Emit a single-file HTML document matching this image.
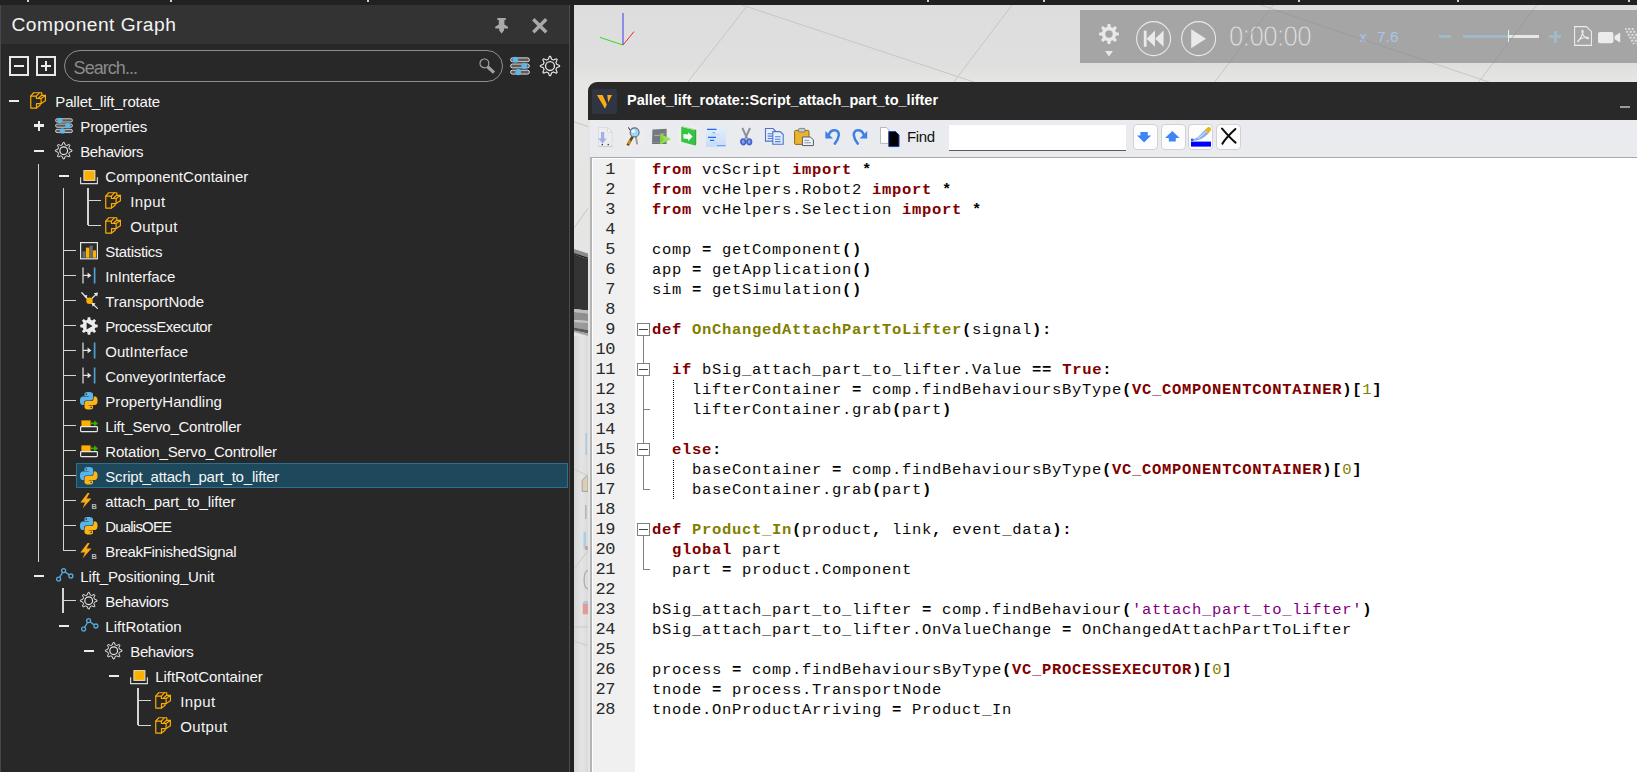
<!DOCTYPE html>
<html>
<head>
<meta charset="utf-8">
<title>Component Graph</title>
<style>
*{box-sizing:border-box;margin:0;padding:0}
html,body{width:1637px;height:772px;overflow:hidden;background:#dedede}
body{position:relative;font-family:"Liberation Sans",sans-serif;color:#f2f2f2}
.abs{position:absolute}
svg.ic{display:block;overflow:visible}
#topbar{left:0;top:0;width:1637px;height:5px;background:#212121}
#topbar i{position:absolute;top:0;width:2px;height:2px;background:#cfcfcf}
/* left panel */
#panel{left:0;top:5px;width:570px;height:767px;background:#282828;border-left:1px solid #474747;border-right:1px solid #4c4c4c}
#phead{left:1px;top:5px;width:568px;height:39px;background:#333}
#ptitle{left:11.5px;top:12.5px;font-size:19.2px;letter-spacing:0.46px;line-height:24px;color:#f4f4f4;white-space:nowrap}
#gutter{left:570px;top:5px;width:4px;height:767px;background:#222}
.tbox{position:absolute;top:56px;width:20px;height:20px;border:2px solid #e8e8e8}
#search{left:63.6px;top:50.2px;width:439.6px;height:31.8px;border:1.3px solid #8e8e8e;border-radius:16px}
#stext{left:73.6px;top:56.3px;font-size:18px;letter-spacing:-0.95px;line-height:24px;color:#8b8b8b;white-space:nowrap}
/* tree */
.lbl{position:absolute;line-height:25px;height:25px;font-size:15px;color:#f6f6f6;white-space:nowrap;padding-top:1px}
.ln{position:absolute;background:#d4d4d4}
.tg{position:absolute;background:#ececec}
#sel{left:76px;top:463px;width:492px;height:25px;background:#1e495d;border:1px solid #2b7091}
/* viewport */
#view{left:574px;top:5px;width:1063px;height:767px;background:linear-gradient(180deg,#dddddd 0,#dfdfdf 60px,#e6e6e4 78px,#e2e2e2 100%)}
#sim{left:1080px;top:10px;width:557px;height:53px;background:#a5a5a5}
/* editor window */
#win{left:588px;top:82px;width:1049px;height:690px;background:#e9ebee;border-top-left-radius:9px;overflow:hidden;border-left:2px solid #e4e4e4}
#wtitle{left:588px;top:82px;width:1049px;height:37.5px;background:#292929;border-top-left-radius:9px}
#wtext{left:627px;top:90px;font-size:14.5px;font-weight:bold;line-height:20px;color:#fff;white-space:nowrap}
#logo{left:592px;top:88.5px;width:25px;height:25px;background:#2f3541;border-radius:2px}
#find{left:907px;top:126.7px;font-size:15px;letter-spacing:-0.4px;line-height:20px;color:#101010}
#finput{left:949px;top:125px;width:177px;height:26px;background:#fff;border-bottom:1.2px solid #5a5a5a}
.fbtn{position:absolute;top:124.3px;width:25px;height:25.4px;background:#fdfdfd;border:1px solid #d2d2d2;border-radius:4px}
#edline{left:591px;top:157px;width:1046px;height:1px;background:#a9a9a9}
#edleft{left:590px;top:157px;width:1.6px;height:615px;background:#b4b4b4}
#ed{left:592px;top:158px;width:1045px;height:614px;background:#fff}
#lnm{left:593px;top:159px;width:42px;height:613px;background:#f0f0f0}
.num{position:absolute;left:585px;width:30px;height:20px;text-align:right;font-family:"Liberation Mono",monospace;font-size:17px;line-height:20px;color:#2a2a2a;letter-spacing:-0.4px;padding-top:1px}
.cl{position:absolute;left:652px;height:20px;line-height:20px;font-family:"Liberation Mono",monospace;font-size:15.5px;letter-spacing:0.7px;color:#0a0a0a;white-space:pre;padding-top:1px}
.cl b{font-weight:bold}
.k{color:#7f0000}
.f{color:#7f7f00}
.o{color:#000}
.s{color:#7f007f;font-weight:normal!important}
.n{color:#7f7f00;font-weight:normal!important}
.fb{position:absolute;left:637px;width:13px;height:13px;border:1px solid #808080;background:#fff}
.fb:after{content:"";position:absolute;left:1px;top:5px;width:9px;height:1px;background:#444}
.fl{position:absolute;background:#808080}
.ig{position:absolute;left:672.5px;width:1px;background:repeating-linear-gradient(180deg,#000 0,#000 1px,transparent 1px,transparent 2px)}
#simtime{left:1229px;top:18.6px;font-size:26.5px;line-height:36px;color:#e6e6e6;letter-spacing:-0.6px;-webkit-text-stroke:0.9px #a5a5a5;transform:scale(0.975,1.13);transform-origin:0 27px}
#simx{left:1359.6px;top:27.4px;font-size:14px;line-height:20px;color:#a9c6ea}
#simv{left:1377px;top:27px;font-size:15.5px;line-height:20px;color:#a9c6ea}
</style>
</head>
<body>
<div id="view" class="abs"></div>
<div class="abs" style="left:599.0px;top:12.0px;width:36px;height:36px;"><svg class="ic" width="36" height="36" viewBox="0 0 36 36" ><path d="M24 1 V33" stroke="#3c3cf0" stroke-width="1"/><path d="M24 33 L1 25.4" stroke="#28e028" stroke-width="1"/><path d="M24 33 L35 19.6" stroke="#f02828" stroke-width="1"/></svg></div>
<svg class="abs" style="left:0;top:0" width="1637" height="772" viewBox="0 0 1637 772"><g stroke="#c6c6c4" stroke-width="1" fill="none"><path d="M747.7 5 L687 83"/><path d="M742 5 L971 81 L1000 91"/><path d="M1012 5 L953 83"/><path d="M1273 5 L1214 83"/><path d="M1260.6 5 L1483 80 L1500 86"/><path d="M1536.8 5 L1478 83"/><path d="M574 121.8 L589 127"/><path d="M574 228 L589 207"/><path d="M574 455 L589 462"/><path d="M574 600 L589 585"/></g></svg><svg class="abs" style="left:574px;top:82px" width="14" height="690" viewBox="574 82 14 690"><defs><linearGradient id="sg" x1="0" x2="1" y1="0" y2="0"><stop offset="0" stop-color="#d6d6d6"/><stop offset="0.55" stop-color="#e4e4e4"/><stop offset="1" stop-color="#dadada"/></linearGradient></defs><rect x="574" y="336" width="14" height="436" fill="url(#sg)"/><path d="M574 249 L588 253.6 V257.4 L574 253Z" fill="#8c8c8c"/><path d="M574 253 L588 257.4 V259 L574 254.6Z" fill="#1c1c1c"/><path d="M574 254.6 L588 259 V310.6 L574 309Z" fill="#343434"/><path d="M574 309 L588 310.6 V313.4 L574 312Z" fill="#bdbdbd"/><path d="M574 312 L588 313.4 V321 L574 320Z" fill="#8e8e8e"/><path d="M574 320 L588 321 V323 L574 322Z" fill="#c2c2c2"/><path d="M574 322 L588 323 V330 L574 327.6Z" fill="#9a9a9a"/><path d="M574 327.6 L588 330 V333.4 L574 330.6Z" fill="#5a5a5a"/><path d="M574 330.6 L588 333.4 V336 L574 332Z" fill="#a4a4a4"/><path d="M586.3 433 V455" stroke="#a9c9e2" stroke-width="1.5"/><path d="M582.2 480.2 L588 474.8 V491.4 H582.2Z" fill="#dccfb2" stroke="#a2a2a2" stroke-width="1"/><path d="M585.8 505 V519" stroke="#b6b6b6" stroke-width="1.6"/><path d="M584.8 532 V549.4" stroke="#a6d0ea" stroke-width="2.6"/><rect x="585.6" y="546" width="2" height="4" fill="#e08a7a"/><path d="M588 570.4 Q583.8 572 584.2 580 Q584 588 588 589" fill="none" stroke="#aaa" stroke-width="1.2"/><path d="M582.8 603 L585 601.2 H588 V614.2 H582.8Z" fill="#e29a96"/><path d="M582.8 603 L585 601.2 H588 V604 H582.8Z" fill="#a9c9e2"/><g stroke="#c9c9c7" stroke-width="1" fill="none"><path d="M574 469 L588 476"/><path d="M574 569 L588 550.6"/><path d="M574 627 H588"/><path d="M574 641 L588 645.6"/></g></svg>
<div id="topbar" class="abs"><i style="left:27px"></i><i style="left:170px"></i><i style="left:367px"></i><i style="left:927px"></i><i style="left:1043px"></i><i style="left:1298px"></i><i style="left:1457px"></i><i style="left:1628px"></i></div>
<div id="sim" class="abs"></div>
<div class="abs" style="left:1099.0px;top:24.4px;width:20px;height:20px;"><svg class="ic" width="20" height="20" viewBox="0 0 20 20" ><path fill="#e9e9e9" fill-rule="evenodd" d="M8.26 3.01 L8.67 0.09 L11.33 0.09 L11.74 3.01 L13.71 3.83 L16.07 2.05 L17.95 3.93 L16.17 6.29 L16.99 8.26 L19.91 8.67 L19.91 11.33 L16.99 11.74 L16.17 13.71 L17.95 16.07 L16.07 17.95 L13.71 16.17 L11.74 16.99 L11.33 19.91 L8.67 19.91 L8.26 16.99 L6.29 16.17 L3.93 17.95 L2.05 16.07 L3.83 13.71 L3.01 11.74 L0.09 11.33 L0.09 8.67 L3.01 8.26 L3.83 6.29 L2.05 3.93 L3.93 2.05 L6.29 3.83Z M10 6.2 A3.8 3.8 0 1 0 10.01 6.2Z"/></svg></div>
<div class="abs" style="left:1105.2px;top:51.0px;width:8px;height:5.6px;"><svg class="ic" width="8" height="5.6" viewBox="0 0 8 5.6" ><path d="M0 0 H8 L4 5.6Z" fill="#e9e9e9"/></svg></div>
<div class="abs" style="left:1136.4px;top:21.1px;width:35.2px;height:35.2px;"><svg class="ic" width="35.2" height="35.2" viewBox="0 0 35.2 35.2" ><circle cx="17.6" cy="17.6" r="17" fill="none" stroke="#e9e9e9" stroke-width="1.1"/><rect x="7.8" y="9.6" width="2.8" height="16.2" fill="#e9e9e9"/><path d="M19 9.6 V25.8 L10.6 17.7Z M27.6 9.6 V25.8 L19.2 17.7Z" fill="#e9e9e9"/></svg></div>
<div class="abs" style="left:1181.4px;top:21.1px;width:35.2px;height:35.2px;"><svg class="ic" width="35.2" height="35.2" viewBox="0 0 35.2 35.2" ><circle cx="17.6" cy="17.6" r="17" fill="none" stroke="#e9e9e9" stroke-width="1.1"/><path d="M10.2 8.2 L25 17.7 L10.2 27.2Z" fill="#e9e9e9"/></svg></div>
<div id="simtime" class="abs">0:00:00</div>
<div id="simx" class="abs">x</div><div id="simv" class="abs">7.6</div>
<div class="abs" style="left:1439px;top:35.2px;width:12px;height:3px;background:#9fb9c6"></div>
<div class="abs" style="left:1462.5px;top:35.2px;width:46px;height:3px;background:#9fb9c6"></div>
<div class="abs" style="left:1508.5px;top:35.2px;width:30.5px;height:3px;background:#e8e8e8"></div>
<div class="abs" style="left:1508px;top:30px;width:1.4px;height:13px;background:#ececec"></div>
<div class="abs" style="left:1549px;top:35.2px;width:12px;height:3px;background:#9fb9c6"></div>
<div class="abs" style="left:1553.6px;top:30.6px;width:3px;height:12px;background:#9fb9c6"></div>
<div class="abs" style="left:1574.0px;top:26.0px;width:18px;height:20px;"><svg class="ic" width="18" height="20" viewBox="0 0 18 20" ><path d="M0.6 0.6 H12.4 L17.4 5.4 V19.4 H0.6Z" fill="none" stroke="#ececec" stroke-width="1.1"/><path d="M8.6 4.2 C10.2 4.6 8 10 4.2 15.4 C3 16.6 3.4 13.8 8.4 12 C12.6 10.6 15.6 11.6 14.4 12.6 C13 13.4 9.4 10.6 8.2 6.6 C7.8 5 8 4.2 8.6 4.2Z" fill="none" stroke="#ececec" stroke-width="1.1"/></svg></div>
<div class="abs" style="left:1598.0px;top:31.8px;width:22.4px;height:11.2px;"><svg class="ic" width="22.4" height="11.2" viewBox="0 0 22.4 11.2" ><rect x="0" y="0" width="15.4" height="11.2" rx="2" fill="#ececec"/><path d="M16.6 4 L22.2 0.6 V10.6 L16.6 7.2Z" fill="#ececec"/></svg></div>
<div class="abs" style="left:1625.0px;top:28.0px;width:12px;height:17px;overflow:hidden"><svg class="ic" width="12" height="17" viewBox="0 0 12 17" ><g stroke="#dcdcdc" stroke-width="2.2" stroke-dasharray="2 1.4"><path d="M0 0 L9 16 M3.6 0 L12.6 16 M7.2 0 L16.2 16"/></g></svg></div>
<svg class="abs" style="left:1080px;top:10px" width="557" height="53" viewBox="1080 10 557 53"><g stroke="#999" stroke-width="1" fill="none" opacity="0.75"><path d="M1273 5 L1214 83"/><path d="M1260.6 5 L1483 80"/><path d="M1536.8 5 L1478 83"/></g></svg>
<div id="panel" class="abs"></div>
<div id="phead" class="abs"></div>
<div id="ptitle" class="abs">Component Graph</div>
<div class="abs" style="left:495.0px;top:17.8px;width:13.2px;height:15.4px;"><svg class="ic" width="13.2" height="15.4" viewBox="0 0 13.2 15.4" ><path fill="#a9a9a9" d="M2.4 0 H10.8 V2 H9.4 V6.4 L13 8.8 V10.4 H9 V12.4 L6.6 15.4 L4.2 12.4 V10.4 H0.2 V8.8 L3.8 6.4 V2 H2.4Z"/></svg></div>
<div class="abs" style="left:531.7px;top:17.6px;width:15.6px;height:15.6px;"><svg class="ic" width="15.6" height="15.6" viewBox="0 0 15.6 15.6" ><path d="M1.3 1.3 L14.3 14.3 M14.3 1.3 L1.3 14.3" stroke="#a9a9a9" stroke-width="3.4" fill="none"/></svg></div>
<div class="abs" style="left:478.6px;top:57.8px;width:16px;height:16px;"><svg class="ic" width="16" height="16" viewBox="0 0 16 16" ><circle cx="5.4" cy="5.4" r="4.4" fill="none" stroke="#a2a2a2" stroke-width="1.2"/><path d="M8.6 8.8 L15 14.6" stroke="#a2a2a2" stroke-width="3.2"/></svg></div>
<div class="abs" style="left:510.0px;top:57.0px;width:20px;height:18px;"><svg class="ic" width="20" height="18" viewBox="0 0 20 18" ><g transform="scale(1.1111 1.1688)"><rect x="0.55" y="0.75" width="16.9" height="3.3" rx="1.65" fill="#5a5a5a" stroke="#e4e4e4" stroke-width="0.85"/><rect x="0.55" y="6.00" width="16.9" height="3.3" rx="1.65" fill="#5a5a5a" stroke="#e4e4e4" stroke-width="0.85"/><rect x="0.55" y="11.30" width="16.9" height="3.3" rx="1.65" fill="#5a5a5a" stroke="#e4e4e4" stroke-width="0.85"/><circle cx="4.9" cy="2.4" r="2.6" fill="#5bb7ea"/><circle cx="12.8" cy="7.65" r="2.6" fill="#5bb7ea"/><circle cx="7.4" cy="12.95" r="2.6" fill="#5bb7ea"/></g></svg></div>
<div class="abs" style="left:540.0px;top:56.0px;width:20px;height:20px;"><svg class="ic" width="20" height="20" viewBox="0 0 20 20" ><g transform="scale(1.0000)" fill="none" stroke="#e8e8e8" stroke-linejoin="round"><path stroke-width="1.15" d="M8.28 3.32 L9.43 0.42 L10.57 0.42 L11.72 3.32 L13.51 4.06 L16.38 2.82 L17.18 3.62 L15.94 6.49 L16.68 8.28 L19.58 9.43 L19.58 10.57 L16.68 11.72 L15.94 13.51 L17.18 16.38 L16.38 17.18 L13.51 15.94 L11.72 16.68 L10.57 19.58 L9.43 19.58 L8.28 16.68 L6.49 15.94 L3.62 17.18 L2.82 16.38 L4.06 13.51 L3.32 11.72 L0.42 10.57 L0.42 9.43 L3.32 8.28 L4.06 6.49 L2.82 3.62 L3.62 2.82 L6.49 4.06Z"/><circle cx="10" cy="10" r="4.45" stroke-width="1.35"/></g></svg></div>
<div class="tbox" style="left:9px"></div><div class="tbox" style="left:36px"></div>
<div class="tg" style="left:14px;top:65px;width:10px;height:2px"></div>
<div class="tg" style="left:41px;top:65px;width:10px;height:2px"></div><div class="tg" style="left:45px;top:61px;width:2px;height:10px"></div>
<div id="search" class="abs"></div>
<div id="stext" class="abs">Search...</div>
<div id="sel" class="abs"></div>
<div class="tg" style="left:9.4px;top:99.5px;width:9.8px;height:2px"></div>
<div class="abs" style="left:30.0px;top:91.9px;width:16px;height:17.2px"><svg class="ic" width="16" height="17.2" viewBox="0 0 16 17.2" ><g fill="none" stroke="#fbab00" stroke-width="1.2" stroke-linejoin="round" stroke-linecap="round"><path d="M0.75 4.1 L3.7 0.75 H11.8 V2.9"/><path d="M6.4 4.1 L9.2 0.9"/><path d="M0.75 4.1 V16.1 H6.5 V11.6 H11.1 V6.5 H6.4 V4.1 Z"/><path d="M11.1 6.5 L15.4 3.3 V8.8 L11.1 11.6"/><path d="M15.4 3.3 H11.6 L8.4 6.2"/><path d="M6.5 16.1 L10.1 13.3 V11.8"/></g></svg></div>
<div class="lbl" id="l0" style="left:55.3px;top:88px;letter-spacing:-0.163px">Pallet_lift_rotate</div>
<div class="tg" style="left:34.3px;top:124.4px;width:10px;height:2.2px"></div>
<div class="tg" style="left:38.2px;top:120.5px;width:2.2px;height:10px"></div>
<div class="abs" style="left:55.0px;top:117.8px;width:18px;height:15.4px"><svg class="ic" width="18" height="15.4" viewBox="0 0 18 15.4" ><g transform="scale(1.0000 1.0000)"><rect x="0.55" y="0.75" width="16.9" height="3.3" rx="1.65" fill="#5a5a5a" stroke="#e4e4e4" stroke-width="0.85"/><rect x="0.55" y="6.00" width="16.9" height="3.3" rx="1.65" fill="#5a5a5a" stroke="#e4e4e4" stroke-width="0.85"/><rect x="0.55" y="11.30" width="16.9" height="3.3" rx="1.65" fill="#5a5a5a" stroke="#e4e4e4" stroke-width="0.85"/><circle cx="4.9" cy="2.4" r="2.6" fill="#5bb7ea"/><circle cx="12.8" cy="7.65" r="2.6" fill="#5bb7ea"/><circle cx="7.4" cy="12.95" r="2.6" fill="#5bb7ea"/></g></svg></div>
<div class="lbl" id="l1" style="left:80.3px;top:113px;letter-spacing:-0.164px">Properties</div>
<div class="tg" style="left:34.4px;top:149.5px;width:9.8px;height:2px"></div>
<div class="abs" style="left:55.3px;top:141.8px;width:17.4px;height:17.4px"><svg class="ic" width="17.4" height="17.4" viewBox="0 0 17.4 17.4" ><g transform="scale(0.8700)" fill="none" stroke="#e8e8e8" stroke-linejoin="round"><path stroke-width="1.15" d="M8.28 3.32 L9.43 0.42 L10.57 0.42 L11.72 3.32 L13.51 4.06 L16.38 2.82 L17.18 3.62 L15.94 6.49 L16.68 8.28 L19.58 9.43 L19.58 10.57 L16.68 11.72 L15.94 13.51 L17.18 16.38 L16.38 17.18 L13.51 15.94 L11.72 16.68 L10.57 19.58 L9.43 19.58 L8.28 16.68 L6.49 15.94 L3.62 17.18 L2.82 16.38 L4.06 13.51 L3.32 11.72 L0.42 10.57 L0.42 9.43 L3.32 8.28 L4.06 6.49 L2.82 3.62 L3.62 2.82 L6.49 4.06Z"/><circle cx="10" cy="10" r="4.45" stroke-width="1.35"/></g></svg></div>
<div class="lbl" id="l2" style="left:80.3px;top:138px;letter-spacing:-0.438px">Behaviors</div>
<div class="tg" style="left:59.4px;top:174.5px;width:9.8px;height:2px"></div>
<div class="abs" style="left:80.0px;top:170.1px;width:18px;height:14.4px"><svg class="ic" width="18" height="14.4" viewBox="0 0 18 14.4" ><path d="M0.6 7.2 V13.6 H17.4 V7.2" fill="none" stroke="#d8d8d8" stroke-width="1.2"/><rect x="3.9" y="0.6" width="11" height="9.8" fill="#fdb000" stroke="#e8e0c8" stroke-width="1"/></svg></div>
<div class="lbl" id="l3" style="left:105.3px;top:163px;letter-spacing:0.024px">ComponentContainer</div>
<div class="abs" style="left:105.0px;top:191.9px;width:16px;height:17.2px"><svg class="ic" width="16" height="17.2" viewBox="0 0 16 17.2" ><g fill="none" stroke="#fbab00" stroke-width="1.2" stroke-linejoin="round" stroke-linecap="round"><path d="M0.75 4.1 L3.7 0.75 H11.8 V2.9"/><path d="M6.4 4.1 L9.2 0.9"/><path d="M0.75 4.1 V16.1 H6.5 V11.6 H11.1 V6.5 H6.4 V4.1 Z"/><path d="M11.1 6.5 L15.4 3.3 V8.8 L11.1 11.6"/><path d="M15.4 3.3 H11.6 L8.4 6.2"/><path d="M6.5 16.1 L10.1 13.3 V11.8"/></g></svg></div>
<div class="lbl" id="l4" style="left:130.3px;top:188px;letter-spacing:0.406px">Input</div>
<div class="abs" style="left:105.0px;top:216.9px;width:16px;height:17.2px"><svg class="ic" width="16" height="17.2" viewBox="0 0 16 17.2" ><g fill="none" stroke="#fbab00" stroke-width="1.2" stroke-linejoin="round" stroke-linecap="round"><path d="M0.75 4.1 L3.7 0.75 H11.8 V2.9"/><path d="M6.4 4.1 L9.2 0.9"/><path d="M0.75 4.1 V16.1 H6.5 V11.6 H11.1 V6.5 H6.4 V4.1 Z"/><path d="M11.1 6.5 L15.4 3.3 V8.8 L11.1 11.6"/><path d="M15.4 3.3 H11.6 L8.4 6.2"/><path d="M6.5 16.1 L10.1 13.3 V11.8"/></g></svg></div>
<div class="lbl" id="l5" style="left:130.3px;top:213px;letter-spacing:0.394px">Output</div>
<div class="abs" style="left:80.0px;top:241.8px;width:18px;height:17.4px"><svg class="ic" width="18" height="17.4" viewBox="0 0 18 17.4" ><rect x="0.6" y="0.6" width="16.8" height="16.2" fill="#2a2a2a" stroke="#e6e6e6" stroke-width="1.2"/><rect x="2.4" y="9.4" width="3.2" height="6.4" fill="#6c6c6c"/><rect x="5.9" y="5.6" width="3.6" height="10.2" fill="#fdb000"/><rect x="9.6" y="3.6" width="3.2" height="12.2" fill="#6c6c6c"/><rect x="12.9" y="8.4" width="3.2" height="7.4" fill="#fdb000"/></svg></div>
<div class="lbl" id="l6" style="left:105.3px;top:238px;letter-spacing:-0.313px">Statistics</div>
<div class="abs" style="left:82.0px;top:267.0px;width:14px;height:17px"><svg class="ic" width="14" height="17" viewBox="0 0 14 17" ><path d="M1 0.5 V16.5" stroke="#dcdcdc" stroke-width="1.25"/><path d="M1 8.4 H7" stroke="#dcdcdc" stroke-width="1.25"/><path d="M5.6 5.6 L9.4 8.4 L5.6 11.2Z" fill="#e6e6e6"/><path d="M12.6 0.5 V16.5" stroke="#4f9fd0" stroke-width="1.7"/></svg></div>
<div class="lbl" id="l7" style="left:105.3px;top:263px;letter-spacing:-0.089px">InInterface</div>
<div class="abs" style="left:80.5px;top:291.8px;width:17.5px;height:17.5px"><svg class="ic" width="17.5" height="17.5" viewBox="0 0 17.5 17.5" ><g stroke="#e6e6e6" stroke-width="1.3" stroke-linecap="round"><path d="M0.8 0.8 L8.5 8.7"/><path d="M8.5 8.7 L16 1.4"/><path d="M8.5 8.7 L16.4 16.4"/></g><path d="M16.8 0.4 L16.2 4.6 L12.8 1.2Z" fill="#ececec"/><path d="M10.6 10.8 L14.6 11.6 L11.6 14.8Z" fill="#ececec"/><path d="M3.2 5.8 L6.6 5.0 L4.6 2.6Z" fill="#ececec" transform="rotate(180 4.8 4.4)"/><circle cx="8.5" cy="8.7" r="3.2" fill="#fdb000"/></svg></div>
<div class="lbl" id="l8" style="left:105.3px;top:288px;letter-spacing:-0.058px">TransportNode</div>
<div class="abs" style="left:80.0px;top:316.5px;width:18px;height:18px"><svg class="ic" width="18" height="18" viewBox="0 0 18 18" ><path fill="#ececec" d="M7.36 2.81 L7.76 0.29 L10.24 0.29 L10.64 2.81 L12.21 3.47 L14.28 1.96 L16.04 3.72 L14.53 5.79 L15.19 7.36 L17.71 7.76 L17.71 10.24 L15.19 10.64 L14.53 12.21 L16.04 14.28 L14.28 16.04 L12.21 14.53 L10.64 15.19 L10.24 17.71 L7.76 17.71 L7.36 15.19 L5.79 14.53 L3.72 16.04 L1.96 14.28 L3.47 12.21 L2.81 10.64 L0.29 10.24 L0.29 7.76 L2.81 7.36 L3.47 5.79 L1.96 3.72 L3.72 1.96 L5.79 3.47Z"/><path fill="#282828" d="M6.6 5.4 L12.6 9 L6.6 12.6Z"/></svg></div>
<div class="lbl" id="l9" style="left:105.3px;top:313px;letter-spacing:-0.464px">ProcessExecutor</div>
<div class="abs" style="left:82.0px;top:342.0px;width:14px;height:17px"><svg class="ic" width="14" height="17" viewBox="0 0 14 17" ><path d="M1 0.5 V16.5" stroke="#dcdcdc" stroke-width="1.25"/><path d="M1 8.4 H7" stroke="#dcdcdc" stroke-width="1.25"/><path d="M5.6 5.6 L9.4 8.4 L5.6 11.2Z" fill="#e6e6e6"/><path d="M12.6 0.5 V16.5" stroke="#4f9fd0" stroke-width="1.7"/></svg></div>
<div class="lbl" id="l10" style="left:105.3px;top:338px;letter-spacing:0.023px">OutInterface</div>
<div class="abs" style="left:82.0px;top:367.0px;width:14px;height:17px"><svg class="ic" width="14" height="17" viewBox="0 0 14 17" ><path d="M1 0.5 V16.5" stroke="#dcdcdc" stroke-width="1.25"/><path d="M1 8.4 H7" stroke="#dcdcdc" stroke-width="1.25"/><path d="M5.6 5.6 L9.4 8.4 L5.6 11.2Z" fill="#e6e6e6"/><path d="M12.6 0.5 V16.5" stroke="#4f9fd0" stroke-width="1.7"/></svg></div>
<div class="lbl" id="l11" style="left:105.3px;top:363px;letter-spacing:-0.130px">ConveyorInterface</div>
<div class="abs" style="left:80.2px;top:391.8px;width:17.5px;height:17.5px"><svg class="ic" width="17.5" height="17.5" viewBox="0 0 17.5 17.5" ><g transform="scale(0.73)"><path fill-rule="evenodd" fill="#5bb4e8" d="M14.25.18l.9.2.73.26.59.3.45.32.34.34.25.34.16.33.1.3.04.26.02.2-.01.13V8.5l-.05.63-.13.55-.21.46-.26.38-.3.31-.33.25-.35.19-.35.14-.33.1-.3.07-.26.04-.21.02H8.77l-.69.05-.59.14-.5.22-.41.27-.33.32-.27.35-.2.36-.15.37-.1.35-.07.32-.04.27-.02.21v3.06H3.17l-.21-.03-.28-.07-.32-.12-.35-.18-.36-.26-.36-.36-.35-.46-.32-.59-.28-.73-.21-.88-.14-1.05-.05-1.23.06-1.22.16-1.04.24-.87.32-.71.36-.57.4-.44.42-.33.42-.24.4-.16.36-.1.32-.05.24-.01h.16l.06.01h8.16v-.83H6.18l-.01-2.75-.02-.37.05-.34.11-.31.17-.28.25-.26.31-.23.38-.2.44-.18.51-.15.58-.12.64-.1.71-.06.77-.04.84-.02 1.27.05zM7.95 2.16l-.23.33-.08.41.08.41.23.34.33.22.41.09.41-.09.33-.22.23-.34.08-.41-.08-.41-.23-.33-.33-.22-.41-.09-.41.09z"/><path fill-rule="evenodd" fill="#fdb515" d="M21.04 6.11l.28.06.32.12.35.18.36.27.36.35.35.47.32.59.28.73.21.88.14 1.04.05 1.23-.06 1.23-.16 1.04-.24.86-.32.71-.36.57-.4.45-.42.33-.42.24-.4.16-.36.09-.32.05-.24.02-.16-.01h-8.22v.82h5.84l.01 2.76.02.36-.05.34-.11.31-.17.29-.25.25-.31.24-.38.2-.44.17-.51.15-.58.13-.64.09-.71.07-.77.04-.84.01-1.27-.04-1.07-.14-.9-.2-.73-.25-.59-.3-.45-.33-.34-.34-.25-.34-.16-.33-.1-.3-.04-.25-.02-.2.01-.13v-5.34l.05-.64.13-.54.21-.46.26-.38.3-.32.33-.24.35-.2.35-.14.33-.1.3-.06.26-.04.21-.02.13-.01h5.84l.69-.05.59-.14.5-.21.41-.28.33-.32.27-.35.2-.36.15-.36.1-.35.07-.32.04-.28.02-.21V6.07h2.09l.14.01zM14.57 20.36l-.23.33-.08.41.08.41.23.33.33.23.41.08.41-.08.33-.23.23-.33.08-.41-.08-.41-.23-.33-.33-.23-.41-.08-.41.08z"/></g></svg></div>
<div class="lbl" id="l12" style="left:105.3px;top:388px;letter-spacing:0.046px">PropertyHandling</div>
<div class="abs" style="left:80.0px;top:420.3px;width:18px;height:12.4px"><svg class="ic" width="18" height="12.4" viewBox="0 0 18 12.4" ><rect x="1.4" y="0.4" width="9.2" height="5.6" fill="#fdb000"/><path d="M11 2.6 H14.2 V0.2 L18 3.4 L14.2 6.6 V4.3 H11Z" fill="#35b000"/><rect x="0.6" y="6.6" width="16.8" height="5" rx="0.8" fill="#2a2a2a" stroke="#e8e8e8" stroke-width="1.2"/></svg></div>
<div class="lbl" id="l13" style="left:105.3px;top:413px;letter-spacing:-0.245px">Lift_Servo_Controller</div>
<div class="abs" style="left:80.0px;top:445.3px;width:18px;height:12.4px"><svg class="ic" width="18" height="12.4" viewBox="0 0 18 12.4" ><rect x="1.4" y="0.4" width="9.2" height="5.6" fill="#fdb000"/><path d="M11 2.6 H14.2 V0.2 L18 3.4 L14.2 6.6 V4.3 H11Z" fill="#35b000"/><rect x="0.6" y="6.6" width="16.8" height="5" rx="0.8" fill="#2a2a2a" stroke="#e8e8e8" stroke-width="1.2"/></svg></div>
<div class="lbl" id="l14" style="left:105.3px;top:438px;letter-spacing:-0.207px">Rotation_Servo_Controller</div>
<div class="abs" style="left:80.2px;top:466.8px;width:17.5px;height:17.5px"><svg class="ic" width="17.5" height="17.5" viewBox="0 0 17.5 17.5" ><g transform="scale(0.73)"><path fill-rule="evenodd" fill="#5bb4e8" d="M14.25.18l.9.2.73.26.59.3.45.32.34.34.25.34.16.33.1.3.04.26.02.2-.01.13V8.5l-.05.63-.13.55-.21.46-.26.38-.3.31-.33.25-.35.19-.35.14-.33.1-.3.07-.26.04-.21.02H8.77l-.69.05-.59.14-.5.22-.41.27-.33.32-.27.35-.2.36-.15.37-.1.35-.07.32-.04.27-.02.21v3.06H3.17l-.21-.03-.28-.07-.32-.12-.35-.18-.36-.26-.36-.36-.35-.46-.32-.59-.28-.73-.21-.88-.14-1.05-.05-1.23.06-1.22.16-1.04.24-.87.32-.71.36-.57.4-.44.42-.33.42-.24.4-.16.36-.1.32-.05.24-.01h.16l.06.01h8.16v-.83H6.18l-.01-2.75-.02-.37.05-.34.11-.31.17-.28.25-.26.31-.23.38-.2.44-.18.51-.15.58-.12.64-.1.71-.06.77-.04.84-.02 1.27.05zM7.95 2.16l-.23.33-.08.41.08.41.23.34.33.22.41.09.41-.09.33-.22.23-.34.08-.41-.08-.41-.23-.33-.33-.22-.41-.09-.41.09z"/><path fill-rule="evenodd" fill="#fdb515" d="M21.04 6.11l.28.06.32.12.35.18.36.27.36.35.35.47.32.59.28.73.21.88.14 1.04.05 1.23-.06 1.23-.16 1.04-.24.86-.32.71-.36.57-.4.45-.42.33-.42.24-.4.16-.36.09-.32.05-.24.02-.16-.01h-8.22v.82h5.84l.01 2.76.02.36-.05.34-.11.31-.17.29-.25.25-.31.24-.38.2-.44.17-.51.15-.58.13-.64.09-.71.07-.77.04-.84.01-1.27-.04-1.07-.14-.9-.2-.73-.25-.59-.3-.45-.33-.34-.34-.25-.34-.16-.33-.1-.3-.04-.25-.02-.2.01-.13v-5.34l.05-.64.13-.54.21-.46.26-.38.3-.32.33-.24.35-.2.35-.14.33-.1.3-.06.26-.04.21-.02.13-.01h5.84l.69-.05.59-.14.5-.21.41-.28.33-.32.27-.35.2-.36.15-.36.1-.35.07-.32.04-.28.02-.21V6.07h2.09l.14.01zM14.57 20.36l-.23.33-.08.41.08.41.23.33.33.23.41.08.41-.08.33-.23.23-.33.08-.41-.08-.41-.23-.33-.33-.23-.41-.08-.41.08z"/></g></svg></div>
<div class="lbl" id="l15" style="left:105.3px;top:463px;letter-spacing:-0.196px">Script_attach_part_to_lifter</div>
<div class="abs" style="left:80.3px;top:492.5px;width:17px;height:16px"><svg class="ic" width="17" height="16" viewBox="0 0 17 16" ><path d="M7.6 0 L0.4 9.4 H5.0 L2.6 15.6 L11.4 5.4 H6.6 L9.6 0Z" fill="#fba919"/><text x="11.4" y="15.6" font-family="Liberation Sans,sans-serif" font-weight="bold" font-size="7.4" fill="#bdbdbd">B</text></svg></div>
<div class="lbl" id="l16" style="left:105.3px;top:488px;letter-spacing:-0.115px">attach_part_to_lifter</div>
<div class="abs" style="left:80.2px;top:516.8px;width:17.5px;height:17.5px"><svg class="ic" width="17.5" height="17.5" viewBox="0 0 17.5 17.5" ><g transform="scale(0.73)"><path fill-rule="evenodd" fill="#5bb4e8" d="M14.25.18l.9.2.73.26.59.3.45.32.34.34.25.34.16.33.1.3.04.26.02.2-.01.13V8.5l-.05.63-.13.55-.21.46-.26.38-.3.31-.33.25-.35.19-.35.14-.33.1-.3.07-.26.04-.21.02H8.77l-.69.05-.59.14-.5.22-.41.27-.33.32-.27.35-.2.36-.15.37-.1.35-.07.32-.04.27-.02.21v3.06H3.17l-.21-.03-.28-.07-.32-.12-.35-.18-.36-.26-.36-.36-.35-.46-.32-.59-.28-.73-.21-.88-.14-1.05-.05-1.23.06-1.22.16-1.04.24-.87.32-.71.36-.57.4-.44.42-.33.42-.24.4-.16.36-.1.32-.05.24-.01h.16l.06.01h8.16v-.83H6.18l-.01-2.75-.02-.37.05-.34.11-.31.17-.28.25-.26.31-.23.38-.2.44-.18.51-.15.58-.12.64-.1.71-.06.77-.04.84-.02 1.27.05zM7.95 2.16l-.23.33-.08.41.08.41.23.34.33.22.41.09.41-.09.33-.22.23-.34.08-.41-.08-.41-.23-.33-.33-.22-.41-.09-.41.09z"/><path fill-rule="evenodd" fill="#fdb515" d="M21.04 6.11l.28.06.32.12.35.18.36.27.36.35.35.47.32.59.28.73.21.88.14 1.04.05 1.23-.06 1.23-.16 1.04-.24.86-.32.71-.36.57-.4.45-.42.33-.42.24-.4.16-.36.09-.32.05-.24.02-.16-.01h-8.22v.82h5.84l.01 2.76.02.36-.05.34-.11.31-.17.29-.25.25-.31.24-.38.2-.44.17-.51.15-.58.13-.64.09-.71.07-.77.04-.84.01-1.27-.04-1.07-.14-.9-.2-.73-.25-.59-.3-.45-.33-.34-.34-.25-.34-.16-.33-.1-.3-.04-.25-.02-.2.01-.13v-5.34l.05-.64.13-.54.21-.46.26-.38.3-.32.33-.24.35-.2.35-.14.33-.1.3-.06.26-.04.21-.02.13-.01h5.84l.69-.05.59-.14.5-.21.41-.28.33-.32.27-.35.2-.36.15-.36.1-.35.07-.32.04-.28.02-.21V6.07h2.09l.14.01zM14.57 20.36l-.23.33-.08.41.08.41.23.33.33.23.41.08.41-.08.33-.23.23-.33.08-.41-.08-.41-.23-.33-.33-.23-.41-.08-.41.08z"/></g></svg></div>
<div class="lbl" id="l17" style="left:105.3px;top:513px;letter-spacing:-0.820px">DualisOEE</div>
<div class="abs" style="left:80.3px;top:542.5px;width:17px;height:16px"><svg class="ic" width="17" height="16" viewBox="0 0 17 16" ><path d="M7.6 0 L0.4 9.4 H5.0 L2.6 15.6 L11.4 5.4 H6.6 L9.6 0Z" fill="#fba919"/><text x="11.4" y="15.6" font-family="Liberation Sans,sans-serif" font-weight="bold" font-size="7.4" fill="#bdbdbd">B</text></svg></div>
<div class="lbl" id="l18" style="left:105.3px;top:538px;letter-spacing:-0.343px">BreakFinishedSignal</div>
<div class="tg" style="left:34.4px;top:574.5px;width:9.8px;height:2px"></div>
<div class="abs" style="left:55.5px;top:568.4px;width:17.5px;height:13.6px"><svg class="ic" width="17.5" height="13.6" viewBox="0 0 17.5 13.6" ><g fill="none" stroke="#58a8d8" stroke-width="1.3"><path d="M3.6 9.4 L6.6 4.4 M8.9 3.8 L13.2 6.9"/><circle cx="2.6" cy="11.1" r="2"/><circle cx="7.6" cy="2.6" r="2"/><circle cx="14.9" cy="8" r="2"/></g></svg></div>
<div class="lbl" id="l19" style="left:80.3px;top:563px;letter-spacing:-0.133px">Lift_Positioning_Unit</div>
<div class="abs" style="left:80.3px;top:591.8px;width:17.4px;height:17.4px"><svg class="ic" width="17.4" height="17.4" viewBox="0 0 17.4 17.4" ><g transform="scale(0.8700)" fill="none" stroke="#e8e8e8" stroke-linejoin="round"><path stroke-width="1.15" d="M8.28 3.32 L9.43 0.42 L10.57 0.42 L11.72 3.32 L13.51 4.06 L16.38 2.82 L17.18 3.62 L15.94 6.49 L16.68 8.28 L19.58 9.43 L19.58 10.57 L16.68 11.72 L15.94 13.51 L17.18 16.38 L16.38 17.18 L13.51 15.94 L11.72 16.68 L10.57 19.58 L9.43 19.58 L8.28 16.68 L6.49 15.94 L3.62 17.18 L2.82 16.38 L4.06 13.51 L3.32 11.72 L0.42 10.57 L0.42 9.43 L3.32 8.28 L4.06 6.49 L2.82 3.62 L3.62 2.82 L6.49 4.06Z"/><circle cx="10" cy="10" r="4.45" stroke-width="1.35"/></g></svg></div>
<div class="lbl" id="l20" style="left:105.3px;top:588px;letter-spacing:-0.400px">Behaviors</div>
<div class="tg" style="left:59.4px;top:624.5px;width:9.8px;height:2px"></div>
<div class="abs" style="left:80.5px;top:618.4px;width:17.5px;height:13.6px"><svg class="ic" width="17.5" height="13.6" viewBox="0 0 17.5 13.6" ><g fill="none" stroke="#58a8d8" stroke-width="1.3"><path d="M3.6 9.4 L6.6 4.4 M8.9 3.8 L13.2 6.9"/><circle cx="2.6" cy="11.1" r="2"/><circle cx="7.6" cy="2.6" r="2"/><circle cx="14.9" cy="8" r="2"/></g></svg></div>
<div class="lbl" id="l21" style="left:105.3px;top:613px;letter-spacing:0.046px">LiftRotation</div>
<div class="tg" style="left:84.4px;top:649.5px;width:9.8px;height:2px"></div>
<div class="abs" style="left:105.3px;top:641.8px;width:17.4px;height:17.4px"><svg class="ic" width="17.4" height="17.4" viewBox="0 0 17.4 17.4" ><g transform="scale(0.8700)" fill="none" stroke="#e8e8e8" stroke-linejoin="round"><path stroke-width="1.15" d="M8.28 3.32 L9.43 0.42 L10.57 0.42 L11.72 3.32 L13.51 4.06 L16.38 2.82 L17.18 3.62 L15.94 6.49 L16.68 8.28 L19.58 9.43 L19.58 10.57 L16.68 11.72 L15.94 13.51 L17.18 16.38 L16.38 17.18 L13.51 15.94 L11.72 16.68 L10.57 19.58 L9.43 19.58 L8.28 16.68 L6.49 15.94 L3.62 17.18 L2.82 16.38 L4.06 13.51 L3.32 11.72 L0.42 10.57 L0.42 9.43 L3.32 8.28 L4.06 6.49 L2.82 3.62 L3.62 2.82 L6.49 4.06Z"/><circle cx="10" cy="10" r="4.45" stroke-width="1.35"/></g></svg></div>
<div class="lbl" id="l22" style="left:130.3px;top:638px;letter-spacing:-0.413px">Behaviors</div>
<div class="tg" style="left:109.4px;top:674.5px;width:9.8px;height:2px"></div>
<div class="abs" style="left:130.0px;top:670.1px;width:18px;height:14.4px"><svg class="ic" width="18" height="14.4" viewBox="0 0 18 14.4" ><path d="M0.6 7.2 V13.6 H17.4 V7.2" fill="none" stroke="#d8d8d8" stroke-width="1.2"/><rect x="3.9" y="0.6" width="11" height="9.8" fill="#fdb000" stroke="#e8e0c8" stroke-width="1"/></svg></div>
<div class="lbl" id="l23" style="left:155.3px;top:663px;letter-spacing:-0.067px">LiftRotContainer</div>
<div class="abs" style="left:155.0px;top:691.9px;width:16px;height:17.2px"><svg class="ic" width="16" height="17.2" viewBox="0 0 16 17.2" ><g fill="none" stroke="#fbab00" stroke-width="1.2" stroke-linejoin="round" stroke-linecap="round"><path d="M0.75 4.1 L3.7 0.75 H11.8 V2.9"/><path d="M6.4 4.1 L9.2 0.9"/><path d="M0.75 4.1 V16.1 H6.5 V11.6 H11.1 V6.5 H6.4 V4.1 Z"/><path d="M11.1 6.5 L15.4 3.3 V8.8 L11.1 11.6"/><path d="M15.4 3.3 H11.6 L8.4 6.2"/><path d="M6.5 16.1 L10.1 13.3 V11.8"/></g></svg></div>
<div class="lbl" id="l24" style="left:180.3px;top:688px;letter-spacing:0.356px">Input</div>
<div class="abs" style="left:155.0px;top:716.9px;width:16px;height:17.2px"><svg class="ic" width="16" height="17.2" viewBox="0 0 16 17.2" ><g fill="none" stroke="#fbab00" stroke-width="1.2" stroke-linejoin="round" stroke-linecap="round"><path d="M0.75 4.1 L3.7 0.75 H11.8 V2.9"/><path d="M6.4 4.1 L9.2 0.9"/><path d="M0.75 4.1 V16.1 H6.5 V11.6 H11.1 V6.5 H6.4 V4.1 Z"/><path d="M11.1 6.5 L15.4 3.3 V8.8 L11.1 11.6"/><path d="M15.4 3.3 H11.6 L8.4 6.2"/><path d="M6.5 16.1 L10.1 13.3 V11.8"/></g></svg></div>
<div class="lbl" id="l25" style="left:180.3px;top:713px;letter-spacing:0.354px">Output</div>
<div class="ln" style="left:37.5px;top:163.5px;width:1.5px;height:398.7px"></div>
<div class="ln" style="left:62.5px;top:188.3px;width:1.5px;height:362.2px"></div>
<div class="ln" style="left:63.3px;top:249.8px;width:12.3px;height:1.5px"></div>
<div class="ln" style="left:63.3px;top:274.8px;width:12.3px;height:1.5px"></div>
<div class="ln" style="left:63.3px;top:299.8px;width:12.3px;height:1.5px"></div>
<div class="ln" style="left:63.3px;top:324.8px;width:12.3px;height:1.5px"></div>
<div class="ln" style="left:63.3px;top:349.8px;width:12.3px;height:1.5px"></div>
<div class="ln" style="left:63.3px;top:374.8px;width:12.3px;height:1.5px"></div>
<div class="ln" style="left:63.3px;top:399.8px;width:12.3px;height:1.5px"></div>
<div class="ln" style="left:63.3px;top:424.8px;width:12.3px;height:1.5px"></div>
<div class="ln" style="left:63.3px;top:449.8px;width:12.3px;height:1.5px"></div>
<div class="ln" style="left:63.3px;top:474.8px;width:12.3px;height:1.5px"></div>
<div class="ln" style="left:63.3px;top:499.8px;width:12.3px;height:1.5px"></div>
<div class="ln" style="left:63.3px;top:524.8px;width:12.3px;height:1.5px"></div>
<div class="ln" style="left:63.3px;top:549.8px;width:12.3px;height:1.5px"></div>
<div class="ln" style="left:87.0px;top:188.3px;width:1.5px;height:37.2px"></div>
<div class="ln" style="left:87.8px;top:199.8px;width:12.8px;height:1.5px"></div>
<div class="ln" style="left:87.8px;top:224.8px;width:12.8px;height:1.5px"></div>
<div class="ln" style="left:62.2px;top:588.4px;width:1.5px;height:24.4px"></div>
<div class="ln" style="left:63.0px;top:599.8px;width:12.8px;height:1.5px"></div>
<div class="ln" style="left:137.4px;top:688.4px;width:1.5px;height:37.1px"></div>
<div class="ln" style="left:138.2px;top:699.8px;width:13.2px;height:1.5px"></div>
<div class="ln" style="left:138.2px;top:724.8px;width:13.2px;height:1.5px"></div>
<div id="gutter" class="abs"></div>
<div id="win" class="abs"></div>
<div id="wtitle" class="abs"></div>
<div id="logo" class="abs"></div>
<div id="wtext" class="abs">Pallet_lift_rotate::Script_attach_part_to_lifter</div>
<div class="abs" style="left:597.0px;top:94.9px;width:15px;height:13.8px;"><svg class="ic" width="15" height="13.8" viewBox="0 0 15 13.8" ><path d="M0 0 H5.6 L9.9 9.6 L8 13.8Z M10.3 0 H15 L11.2 7.4Z" fill="#fba919"/></svg></div>
<div class="abs" style="left:1620px;top:106px;width:10px;height:2px;background:#9a9a9a"></div>
<div id="find" class="abs">Find</div>
<div id="finput" class="abs"></div>
<div class="fbtn" style="left:1132.6px"></div><div class="fbtn" style="left:1160.5px"></div><div class="fbtn" style="left:1188.4px"></div><div class="fbtn" style="left:1216.3px"></div>
<div class="abs" style="left:598.2px;top:127.0px;width:14.8px;height:20px;"><svg class="ic" width="14.8" height="20" viewBox="0 0 14.8 20" ><path d="M0.5 0.5 H9.6 L14.2 5.2 V19.2 H0.5Z" fill="#ededee" stroke="#dcdde0" stroke-width="1"/><path d="M9.6 0.5 V5.2 H14.2Z" fill="#fafafa" stroke="#cfd0d4" stroke-width="0.8"/><path d="M0.6 19.6 H14.4" stroke="#c8c9cc" stroke-width="0.9"/><path d="M3 5 H6.2 V11.4 H8.8 L4.6 16.4 L0.2 11.4 H3Z" fill="#a3aeea"/><rect x="3.7" y="16.9" width="1.3" height="1.3" fill="#2a2a33"/><rect x="9.6" y="16.9" width="1.3" height="1.3" fill="#2a2a33"/></svg></div>
<div class="abs" style="left:623.0px;top:126.6px;width:20.6px;height:20px;"><svg class="ic" width="20.6" height="20" viewBox="0 0 20.6 20" ><rect x="0" y="0" width="20.6" height="20" fill="#ececed"/><path d="M12.6 8 L14.2 17.4" stroke="#9aa0a8" stroke-width="2"/><path d="M9.6 9.6 L4.6 18.4" stroke="#6e4212" stroke-width="2.8"/><path d="M7.4 13.4 L5.4 17" stroke="#c8902a" stroke-width="2.8"/><circle cx="11.6" cy="5.4" r="4.5" fill="#9fd4f6" stroke="#5e6f82" stroke-width="1.1"/><circle cx="10.4" cy="4.2" r="1.8" fill="#f2fbff"/><path d="M5.4 0.4 L7 3" stroke="#222" stroke-width="1"/></svg></div>
<div class="abs" style="left:651.0px;top:126.4px;width:20px;height:19.6px;"><svg class="ic" width="20" height="19.6" viewBox="0 0 20 19.6" ><rect x="0" y="0" width="20" height="19.6" fill="#ececed"/><path d="M1.4 3.4 L15.6 2.8 V16.6 H1Z" fill="#717b82"/><path d="M1 16.6 H15.6 V17.8 H1Z" fill="#4c545a"/><path d="M3.4 9.4 H8.6" stroke="#e6a090" stroke-width="1"/><path d="M9.4 8 H13.6" stroke="#d8c890" stroke-width="0.9"/><path d="M9.4 8 L20 13 L9.4 18.4Z" fill="#97e254"/><path d="M9.4 8 L13 13 L9.4 18.4Z" fill="#7fd23a"/></svg></div>
<div class="abs" style="left:678.0px;top:126.0px;width:20.6px;height:20px;"><svg class="ic" width="20.6" height="20" viewBox="0 0 20.6 20" ><rect x="0" y="0" width="20.6" height="20" fill="#eeeeef"/><path d="M3.2 0.8 L17.2 4.2 V19.4 L3.2 15.8Z" fill="#35c443"/><path d="M3.2 0.8 L17.2 4.2 L18.2 3.6 L4.4 0.2Z" fill="#8fe294"/><path d="M17.2 4.2 L18.2 3.6 V18.6 L17.2 19.4Z" fill="#1f8c2a"/><path d="M14.6 10.4 L10.2 6.2 V8.6 L5.4 8 V12.4 L10.2 13 V15.2Z" fill="#f6fff6"/></svg></div>
<div class="abs" style="left:706.0px;top:127.0px;width:20px;height:20px;"><svg class="ic" width="20" height="20" viewBox="0 0 20 20" ><defs><linearGradient id="ob" x1="0" x2="0" y1="0" y2="1"><stop offset="0" stop-color="#e4eefc"/><stop offset="1" stop-color="#c8dcf8"/></linearGradient></defs><rect x="0" y="0" width="20" height="20" fill="url(#ob)"/><g stroke="#1f6fe0" stroke-width="1.3"><path d="M1 2.4 H10.6 M2 10.4 H10 M4 13.4 H8.2"/></g><path d="M6.6 5.6 H9" stroke="#6ea2ec" stroke-width="1.1"/><path d="M11 18.6 H19.4" stroke="#6ea2ec" stroke-width="1.2"/><path d="M5 7.6 H14 M5 16 H12" stroke="#c0d6f6" stroke-width="0.8"/></svg></div>
<div class="abs" style="left:739.5px;top:128.2px;width:12.4px;height:17.4px;"><svg class="ic" width="12.4" height="17.4" viewBox="0 0 12.4 17.4" ><path d="M2.4 0 L7.2 10.6 M10 0 L5.2 10.6" stroke="#8b9099" stroke-width="2" fill="none"/><ellipse cx="3.2" cy="13.8" rx="2.3" ry="2.8" fill="#86a2e6" stroke="#3f63cc" stroke-width="1.7"/><ellipse cx="9.2" cy="13.8" rx="2.3" ry="2.8" fill="#86a2e6" stroke="#3f63cc" stroke-width="1.7"/></svg></div>
<div class="abs" style="left:765.2px;top:128.2px;width:18.8px;height:16.8px;"><svg class="ic" width="18.8" height="16.8" viewBox="0 0 18.8 16.8" ><path d="M0.5 0.5 h7.4 l3 3 v9.6 h-10.4z" fill="#e6eefb" stroke="#4e74c4" stroke-width="1.1"/><path d="M2.7 5.7 h5.6 M2.7 8.1 h5.6 M2.7 10.5 h5.6" stroke="#4f7fdc" stroke-width="1.1"/><path d="M7.8 3.6 h7.4 l3 3 v9.6 h-10.4z" fill="#e6eefb" stroke="#4e74c4" stroke-width="1.1"/><path d="M10.0 8.8 h5.6 M10.0 11.2 h5.6 M10.0 13.6 h5.6" stroke="#4f7fdc" stroke-width="1.1"/></svg></div>
<div class="abs" style="left:794.1px;top:128.0px;width:20px;height:18.2px;"><svg class="ic" width="20" height="18.2" viewBox="0 0 20 18.2" ><rect x="0.6" y="2.4" width="14.4" height="14" rx="1" fill="#e9b432" stroke="#8a6a14" stroke-width="1"/><rect x="4.6" y="0.4" width="6.4" height="3.6" rx="0.8" fill="#c8ccd2" stroke="#6e6e6e" stroke-width="0.8"/><path d="M8.4 9 H16.4 L19.4 12 V17.6 H8.4Z" fill="#eef1f5" stroke="#555c66" stroke-width="1"/><path d="M10.4 12.4 H15 M10.4 14.8 H17" stroke="#8a94a4" stroke-width="1"/></svg></div>
<div class="abs" style="left:825.0px;top:128.2px;width:15.6px;height:17px;"><svg class="ic" width="15.6" height="17" viewBox="0 0 15.6 17" ><path d="M3.8 6.8 C6 0.6 14.4 0.8 13.8 7.4 C13.4 11 11.6 13.4 9.8 15.6" fill="none" stroke="#3f7fe6" stroke-width="2.5" stroke-linecap="round"/><path d="M0.4 3 V10.4 H8Z" fill="#3f7fe6"/></svg></div>
<div class="abs" style="left:852.4px;top:128.2px;width:15.6px;height:17px;"><svg class="ic" width="15.6" height="17" viewBox="0 0 15.6 17" ><path d="M11.8 6.8 C9.6 0.6 1.2 0.8 1.8 7.4 C2.2 11 4 13.4 5.8 15.6" fill="none" stroke="#3f7fe6" stroke-width="2.5" stroke-linecap="round"/><path d="M15.2 3 V10.4 H7.6Z" fill="#3f7fe6"/></svg></div>
<div class="abs" style="left:880.0px;top:126.6px;width:19.6px;height:20.2px;"><svg class="ic" width="19.6" height="20.2" viewBox="0 0 19.6 20.2" ><path d="M0.5 0.5 H6.4 L9 3.2 V16.4 H0.5Z" fill="#fff" stroke="#b4b8c0" stroke-width="1"/><path d="M8.8 4.6 H15.6 L19 8 V19.6 H8.8Z" fill="#000" stroke="#1c3fb0" stroke-width="1"/></svg></div>
<div class="abs" style="left:1137.4px;top:132.0px;width:14.2px;height:10.6px;"><svg class="ic" width="14.2" height="10.6" viewBox="0 0 14.2 10.6" ><path d="M3.4 0 H10.8 V3.4 H14.2 L7.1 10.6 L0 3.4 H3.4Z" fill="#3f86f4"/></svg></div>
<div class="abs" style="left:1165.4px;top:131.4px;width:14.6px;height:10.6px;"><svg class="ic" width="14.6" height="10.6" viewBox="0 0 14.6 10.6" ><path d="M7.3 0 L14.6 7 H10.8 V10.6 H3.8 V7 H0Z" fill="#3f86f4"/></svg></div>
<div class="abs" style="left:1191.2px;top:127.0px;width:20.4px;height:19.8px;"><svg class="ic" width="20.4" height="19.8" viewBox="0 0 20.4 19.8" ><rect x="0" y="14.6" width="20" height="5" fill="#0000fe"/><path d="M1 12.4 C6 12.2 8.6 8.4 13.6 3 L17.4 6.6 C12.4 11.6 8 14 2.6 13.6Z" fill="#86aeea"/><path d="M7 11.6 C10 9.6 12.6 7 15 4.4" stroke="#c8dcf8" stroke-width="1.2" fill="none"/><path d="M13.6 3 L16.8 0.2 C18.6 -0.8 21 1.2 19.8 3.2 L17.4 6.6Z" fill="#e6b422"/><rect x="0" y="11.6" width="2.4" height="2.4" fill="#2f5fd0"/></svg></div>
<div class="abs" style="left:1221.0px;top:128.0px;width:15.6px;height:16.4px;"><svg class="ic" width="15.6" height="16.4" viewBox="0 0 15.6 16.4" ><path d="M1 0.6 C5 5 10 11 14.6 14.6 M14.4 1 C10 5 5 10 1.4 15.6" stroke="#0c0c0c" stroke-width="2" fill="none" stroke-linecap="round"/></svg></div>
<div id="ed" class="abs"></div>
<div id="lnm" class="abs"></div>
<div id="edline" class="abs"></div>
<div id="edleft" class="abs"></div>
<div class="num" style="top:159px">1</div>
<div class="cl" style="top:159px"><b class="k">from</b> vcScript <b class="k">import</b> <b class="o">*</b></div>
<div class="num" style="top:179px">2</div>
<div class="cl" style="top:179px"><b class="k">from</b> vcHelpers.Robot2 <b class="k">import</b> <b class="o">*</b></div>
<div class="num" style="top:199px">3</div>
<div class="cl" style="top:199px"><b class="k">from</b> vcHelpers.Selection <b class="k">import</b> <b class="o">*</b></div>
<div class="num" style="top:219px">4</div>
<div class="num" style="top:239px">5</div>
<div class="cl" style="top:239px">comp <b class="o">=</b> getComponent<b class="o">()</b></div>
<div class="num" style="top:259px">6</div>
<div class="cl" style="top:259px">app <b class="o">=</b> getApplication<b class="o">()</b></div>
<div class="num" style="top:279px">7</div>
<div class="cl" style="top:279px">sim <b class="o">=</b> getSimulation<b class="o">()</b></div>
<div class="num" style="top:299px">8</div>
<div class="num" style="top:319px">9</div>
<div class="cl" style="top:319px"><b class="k">def</b> <b class="f">OnChangedAttachPartToLifter</b><b class="o">(</b>signal<b class="o">):</b></div>
<div class="num" style="top:339px">10</div>
<div class="num" style="top:359px">11</div>
<div class="cl" style="top:359px">  <b class="k">if</b> bSig_attach_part_to_lifter.Value <b class="o">==</b> <b class="k">True</b><b class="o">:</b></div>
<div class="num" style="top:379px">12</div>
<div class="cl" style="top:379px">    lifterContainer <b class="o">=</b> comp.findBehavioursByType<b class="o">(</b><b class="k">VC_COMPONENTCONTAINER</b><b class="o">)[</b><b class="n">1</b><b class="o">]</b></div>
<div class="num" style="top:399px">13</div>
<div class="cl" style="top:399px">    lifterContainer.grab<b class="o">(</b>part<b class="o">)</b></div>
<div class="num" style="top:419px">14</div>
<div class="num" style="top:439px">15</div>
<div class="cl" style="top:439px">  <b class="k">else</b><b class="o">:</b></div>
<div class="num" style="top:459px">16</div>
<div class="cl" style="top:459px">    baseContainer <b class="o">=</b> comp.findBehavioursByType<b class="o">(</b><b class="k">VC_COMPONENTCONTAINER</b><b class="o">)[</b><b class="n">0</b><b class="o">]</b></div>
<div class="num" style="top:479px">17</div>
<div class="cl" style="top:479px">    baseContainer.grab<b class="o">(</b>part<b class="o">)</b></div>
<div class="num" style="top:499px">18</div>
<div class="num" style="top:519px">19</div>
<div class="cl" style="top:519px"><b class="k">def</b> <b class="f">Product_In</b><b class="o">(</b>product<b class="o">,</b> link<b class="o">,</b> event_data<b class="o">):</b></div>
<div class="num" style="top:539px">20</div>
<div class="cl" style="top:539px">  <b class="k">global</b> part</div>
<div class="num" style="top:559px">21</div>
<div class="cl" style="top:559px">  part <b class="o">=</b> product.Component</div>
<div class="num" style="top:579px">22</div>
<div class="num" style="top:599px">23</div>
<div class="cl" style="top:599px">bSig_attach_part_to_lifter <b class="o">=</b> comp.findBehaviour<b class="o">(</b><b class="s">'attach_part_to_lifter'</b><b class="o">)</b></div>
<div class="num" style="top:619px">24</div>
<div class="cl" style="top:619px">bSig_attach_part_to_lifter.OnValueChange <b class="o">=</b> OnChangedAttachPartToLifter</div>
<div class="num" style="top:639px">25</div>
<div class="num" style="top:659px">26</div>
<div class="cl" style="top:659px">process <b class="o">=</b> comp.findBehavioursByType<b class="o">(</b><b class="k">VC_PROCESSEXECUTOR</b><b class="o">)[</b><b class="n">0</b><b class="o">]</b></div>
<div class="num" style="top:679px">27</div>
<div class="cl" style="top:679px">tnode <b class="o">=</b> process.TransportNode</div>
<div class="num" style="top:699px">28</div>
<div class="cl" style="top:699px">tnode.OnProductArriving <b class="o">=</b> Product_In</div>
<div class="fb" style="top:323.0px"></div>
<div class="fb" style="top:363.0px"></div>
<div class="fb" style="top:443.0px"></div>
<div class="fb" style="top:523.0px"></div>
<div class="fl" style="left:643px;top:336.0px;width:1px;height:27.0px"></div>
<div class="fl" style="left:643px;top:376.0px;width:1px;height:67.0px"></div>
<div class="fl" style="left:643px;top:409.0px;width:7px;height:1px"></div>
<div class="fl" style="left:643px;top:456.0px;width:1px;height:34.0px"></div>
<div class="fl" style="left:643px;top:489.0px;width:7px;height:1px"></div>
<div class="fl" style="left:643px;top:536.0px;width:1px;height:34.0px"></div>
<div class="fl" style="left:643px;top:569.0px;width:7px;height:1px"></div>
<div class="ig" style="top:380px;height:60px"></div>
<div class="ig" style="top:460px;height:40px"></div>
</body>
</html>
